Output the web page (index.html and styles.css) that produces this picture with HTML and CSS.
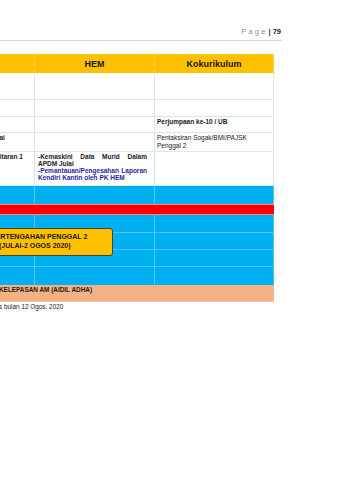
FILE: index.html
```html
<!DOCTYPE html>
<html>
<head>
<meta charset="utf-8">
<link rel="stylesheet" href="styles.css">
</head>
<body>
<div class="page">
  <div class="pghead"><span class="pg">Page</span><span class="sep">|</span><span class="num">79</span></div>

  <div class="tbl">
    <div class="row r-head">
      <div class="c c1"></div>
      <div class="c c2 th">HEM</div>
      <div class="c c3 th">Kokurikulum</div>
    </div>
    <div class="row r1">
      <div class="c c1"></div><div class="c c2"></div><div class="c c3"></div>
    </div>
    <div class="row r2">
      <div class="c c1"></div><div class="c c2"></div><div class="c c3"></div>
    </div>
    <div class="row r3">
      <div class="c c1"></div><div class="c c2"></div>
      <div class="c c3 bold">Perjumpaan ke-10 / UB</div>
    </div>
    <div class="row r4">
      <div class="c c1 bold"><span class="clip-julai">Julai</span></div>
      <div class="c c2"></div>
      <div class="c c3 reg">Pentaksiran Sogak/BMI/PAJSK Penggal 2</div>
    </div>
    <div class="row r5">
      <div class="c c1 bold"><span class="clip-kit">Kitaran 1</span></div>
      <div class="c c2 bold">
        <p class="just">-Kemaskini Data Murid Dalam APDM Julai</p>
        <p class="just navy">-Pemantauan/Pengesahan Laporan Kendiri Kantin oleh PK HEM</p>
      </div>
      <div class="c c3"></div>
    </div>
    <div class="row blue b1">
      <div class="c c1"></div><div class="c c2"></div><div class="c c3"></div>
    </div>
    <div class="row red"></div>
    <div class="row blue b2">
      <div class="c c1"></div><div class="c c2"></div><div class="c c3"></div>
    </div>
    <div class="row blue b3">
      <div class="c c1"></div><div class="c c2"></div><div class="c c3"></div>
    </div>
    <div class="row blue b4">
      <div class="c c1"></div><div class="c c2"></div><div class="c c3"></div>
    </div>
    <div class="row blue b5">
      <div class="c c1"></div><div class="c c2"></div><div class="c c3"></div>
    </div>
    <div class="row salmon"><span class="salmon-text">KELEPASAN AM (AIDIL ADHA)</span></div>
  </div>

  <p class="note">s bulan 12 Ogos. 2020</p>

  <div class="callout">
    <span class="cl1">PERTENGAHAN PENGGAL 2</span>
    <span class="cl2">(JULAI-2 OGOS 2020)</span>
  </div>
</div>
</body>
</html>
```

FILE: styles.css
```css
* { box-sizing: border-box; }
html, body { margin: 0; padding: 0; background: #fff; }
body {
  width: 339px;
  height: 480px;
  overflow: hidden;
  font-family: "Liberation Sans", Arial, sans-serif;
  color: #1a1a1a;
}
.page { position: relative; width: 339px; height: 480px; overflow: hidden; }

.pghead {
  width: 282px;
  height: 41px;
  border-bottom: 1px solid #d9d9d9;
  display: flex;
  justify-content: flex-end;
  align-items: flex-end;
  padding: 0 1px 4px 0;
  font-size: 7.5px;
  line-height: 8px;
}
.pg { color: #8c8c8c; letter-spacing: 2.2px; margin-right: 1px; }
.sep { color: #333; font-weight: bold; margin-right: 2px; }
.num { font-weight: bold; color: #1a1a1a; }

.tbl { margin-top: 13px; width: 274px; }
.row { display: flex; }
.c {
  border-right: 1px solid #dde5ef;
  border-bottom: 1px solid #dde5ef;
  overflow: hidden;
  font-size: 6.5px;
  line-height: 8px;
  white-space: nowrap;
}
.c1 { width: 35px; }
.c2 { width: 120px; padding: 0 7px 0 3px; }
.c3 { width: 119px; padding: 1px 2px 0 2px; }

.r-head { height: 19px; background: #ffc000; }
.r-head .c { border-color: #ffd24d; border-bottom: none; }
.th {
  display: flex; align-items: center; justify-content: center;
  font-size: 9px; font-weight: bold; color: #1a1a1a; padding: 0;
}
.r1 { height: 27px; }
.r2 { height: 17px; }
.r3 { height: 16px; }
.r4 { height: 19px; }
.r5 { height: 34px; }

.bold { font-weight: bold; }
.reg { white-space: normal; }
.r4 .c1 { padding-top: 1px; }
.r5 .c1 { padding-top: 1px; line-height: 7px; }
.clip-julai { display: inline-block; margin-left: -10px; }
.clip-kit { display: inline-block; margin-left: -5px; }

.r5 .c2 { white-space: normal; line-height: 7px; padding-top: 1px; }
.just { margin: 0; text-align: justify; }
.navy { color: #1f1f9e; }

.blue { background: #00b0f0; }
.blue .c { border-color: #4ec6f2; }
.b1 { height: 18px; }
.b2 { height: 18px; }
.b3 { height: 17px; }
.b4 { height: 17px; }
.b5 { height: 18px; }
.b5 .c { border-bottom: none; }
.red {
  height: 11px;
  width: 274px;
  background: #ff0000;
  border-top: 1px solid #f08a8a;
  border-bottom: 1px solid #f08a8a;
}
.b1 .c { border-bottom: none; }
.salmon {
  height: 17px;
  width: 274px;
  background: #f4b183;
  border-bottom: 1px solid #f0c6a8;
  font-size: 6.4px;
  font-weight: bold;
  line-height: 8px;
  padding-top: 1px;
  color: #2a1a10;
}
.salmon-text { display: inline-block; margin-left: -1px; }

.note {
  margin: 1px 0 0 -1px;
  font-size: 6.4px;
  line-height: 8px;
  color: #1a1a1a;
}

.callout {
  position: absolute;
  left: -40px;
  top: 228px;
  width: 153px;
  height: 28px;
  background: #ffc000;
  border: 1px solid #4a4030;
  border-radius: 3px;
  padding-top: 3px;
  font-size: 7px;
  font-weight: bold;
  line-height: 9px;
  color: #1a1a1a;
  white-space: nowrap;
}
.cl1 { display: block; margin-left: 30px; }
.cl2 { display: block; margin-left: 38px; }
```
